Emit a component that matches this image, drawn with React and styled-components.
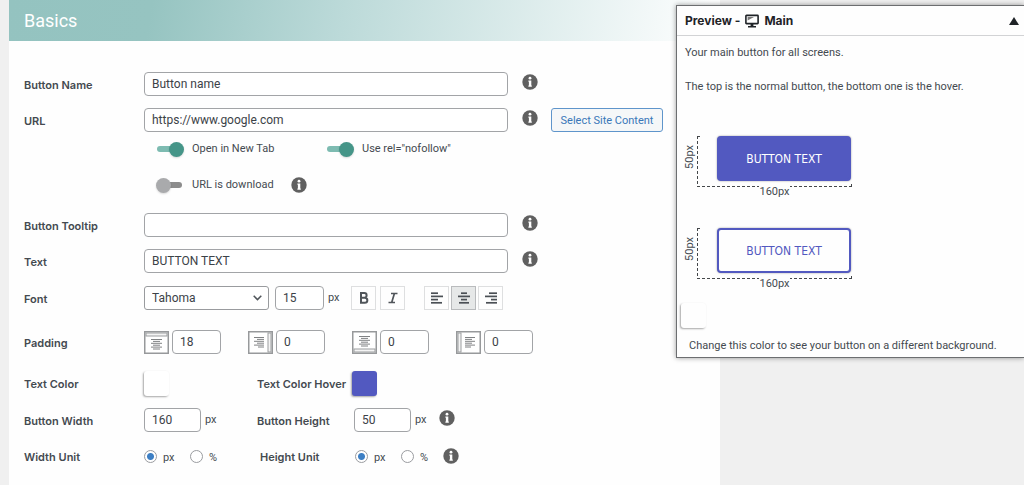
import React from 'react';
import styled, { createGlobalStyle } from 'styled-components';

// global styles

const GlobalStyle = createGlobalStyle`
  * {
    box-sizing: border-box;
  }

  body {
    margin: 0;
    background: #f0f0f0;
    color: #444a50;
    font-family: Roboto, "Liberation Sans", sans-serif;
    font-size: 11px;
    line-height: 16px;
  }

  button, input, select {
    margin: 0;
    font-family: inherit;
  }
`;

// the styles

const Page = styled.div`
  position: relative;
  min-height: 100vh;
  display: flex;
  padding: 0 304px 0 9px;
`;

const Panel = styled.main`
  flex: 1;
  min-width: 0;
  background: #fefefe;
`;

const PanelTitle = styled.h2`
  margin: 0;
  height: 41px;
  padding: 0 15px;
  color: #fff;
  font-size: 18px;
  font-weight: 400;
  line-height: 42px;
  background: linear-gradient(100deg, #94c3c0 0%, #96c4c1 20%, #bcdad9 47%, #fdfefe 98%);
`;

const Form = styled.form`
  padding: 31px 0 16px 15px;
`;

const Row = styled.div`
  display: flex;
  align-items: center;
  height: 24px;
  margin-bottom: ${(props) => props.$space || 12}px;
`;

const Label = styled.label`
  flex: none;
  width: ${(props) => props.$width || 120}px;
  padding-top: 2px;
  font-family: Inter, "Liberation Sans", sans-serif;
  font-weight: 600;
`;

const Input = styled.input`
  flex: none;
  width: ${(props) => props.$width || 364}px;
  height: 24px;
  padding: 0 7px;
  border: 1px solid #a2a4a7;
  border-radius: 4px;
  background: #fff;
  color: #3c4248;
  font-size: 12px;
`;

const InfoIcon = styled.svg`
  flex: none;
  width: 16px;
  height: 20px;
  margin-left: ${(props) => props.$left || 14}px;
  align-self: ${(props) => (props.$middle ? 'center' : 'flex-start')};
`;

const LinkButton = styled.button`
  height: 24px;
  width: 112px;
  margin-left: 13px;
  padding: 0;
  border: 1px solid #5f95cb;
  border-radius: 3px;
  background: #f5f7f8;
  color: #3a77b8;
  font-size: 11px;
  white-space: nowrap;
`;

const Toggles = styled.div`
  display: flex;
  align-items: center;
  padding-left: 132px;
`;

const ToggleLabel = styled.label`
  display: flex;
  align-items: center;
  gap: 8px;
  width: ${(props) => (props.$wide ? '170px' : 'auto')};
`;

const Switch = styled.input`
  appearance: none;
  position: relative;
  width: 28px;
  height: 16px;

  &::before {
    content: '';
    position: absolute;
    top: 5px;
    left: 1px;
    width: 25px;
    height: 6px;
    border-radius: 3px;
    background: #8c8c8c;
  }

  &::after {
    content: '';
    position: absolute;
    top: 1px;
    left: 0;
    width: 15px;
    height: 15px;
    border-radius: 50%;
    background: #a9aaac;
    box-shadow: 0 1px 2px rgba(0, 0, 0, 0.15);
  }

  &:checked::before {
    background: #7dbbb1;
  }

  &:checked::after {
    left: 13px;
    background: #459588;
  }
`;

const SelectBox = styled.div`
  position: relative;
  margin-right: 6px;

  select {
    appearance: none;
    display: block;
    width: 125px;
    height: 24px;
    padding: 0 7px;
    border: 1px solid #999b9e;
    border-radius: 3px;
    background: #fff;
    color: #3c4248;
    font-size: 12px;
  }

  svg {
    position: absolute;
    top: 9px;
    right: 7px;
    pointer-events: none;
  }
`;

const Unit = styled.span`
  width: ${(props) => props.$width || 'auto'};
  padding-left: 4px;
`;

const Buttons = styled.div`
  display: flex;
  gap: ${(props) => props.$gap}px;
  margin-right: 19px;
`;

const IconButton = styled.button`
  display: flex;
  align-items: center;
  justify-content: center;
  width: 25px;
  height: 24px;
  padding: 0;
  border: 1px solid ${(props) => (props.$active ? '#b9bbbd' : '#dedfe0')};
  background: ${(props) => (props.$active ? '#e6e8e8' : '#fefefe')};
  color: #50555a;
`;

const Paddings = styled.div`
  display: flex;
  gap: 27px;
`;

const PaddingField = styled.label`
  display: flex;
  align-items: center;
  gap: 3px;
`;

const Cell = styled.div`
  flex: none;
  display: flex;
  align-items: center;
  width: ${(props) => props.$width || 113}px;
`;

const Swatch = styled.button`
  width: 25px;
  height: 25px;
  padding: 0;
  border: 0;
  border-radius: 3px;
  background: ${(props) => props.$color};
  box-shadow: -1px 1px 2px rgba(0, 0, 0, 0.35);
`;

const RadioLabel = styled.label`
  display: flex;
  align-items: center;
  gap: 6px;
  width: 46px;

  span {
    padding-top: 3px;
  }
`;

const Radio = styled.input`
  appearance: none;
  width: 13px;
  height: 13px;
  border: 1px solid #9a9ca0;
  border-radius: 50%;
  background: #fff;

  &:checked {
    background: radial-gradient(circle, #3d7fc4 3px, #fff 4px);
  }
`;

// the preview box floats over the settings panel

const PreviewBox = styled.aside`
  position: absolute;
  top: 5px;
  right: 0;
  width: 348px;
  border: 1px solid #6c6e70;
  border-right: 0;
  background: #fefefe;
  box-shadow: 0 0 5px rgba(0, 0, 0, 0.4);
`;

const PreviewHead = styled.div`
  display: flex;
  align-items: center;
  justify-content: space-between;
  height: 30px;
  padding: 0 5px 0 8px;
  border-bottom: 1px solid #d2d3d5;
`;

const PreviewTitle = styled.h3`
  display: flex;
  align-items: center;
  gap: 5px;
  margin: 0;
  color: #1f2327;
  font-family: Inter, "Liberation Sans", sans-serif;
  font-size: 12px;
  font-weight: 700;
`;

const Collapse = styled.button`
  display: flex;
  padding: 0;
  border: 0;
  background: none;
`;

const PreviewText = styled.p`
  margin: 0;
  padding: 9px 8px;
`;

const Samples = styled.div`
  display: flex;
  flex-direction: column;
  gap: 31px;
  padding: 32px 5px 14px;
`;

const Sample = styled.div`
  display: grid;
  grid-template-columns: 15px 155px;
  grid-template-rows: 50px 11px;
`;

const HeightMark = styled.span`
  writing-mode: vertical-rl;
  transform: rotate(180deg);
  justify-self: center;
  align-self: center;
  padding-top: 8px;
  line-height: 14px;
`;

const Frame = styled.div`
  position: relative;
  padding-left: 20px;
  background: repeating-linear-gradient(180deg, #44474a 0 3px, transparent 3px 5px) left / 1px 100% no-repeat;

  &::before,
  &::after {
    content: '';
    position: absolute;
    background: #44474a;
  }

  &::before {
    top: 0;
    left: 0;
    width: 3px;
    height: 1px;
  }

  &::after {
    right: 0;
    bottom: 0;
    width: 1px;
    height: 2px;
  }
`;

const WidthMark = styled.div`
  grid-column: 2;
  display: flex;
  line-height: 11px;
`;

const Dashes = styled.span`
  flex: 1;
  height: 1px;
  background: repeating-linear-gradient(
    ${(props) => (props.$reverse ? '270deg' : '90deg')},
    #44474a 0 3px,
    transparent 3px 5px
  );
`;

const SampleButton = styled.button`
  display: block;
  width: 134px;
  height: 45px;
  padding: 0;
  border: 2px solid #5259c0;
  border-radius: 4px;
  background: ${(props) => (props.$hover ? '#fefefe' : '#5259c0')};
  color: ${(props) => (props.$hover ? '#5259c0' : '#fff')};
  font-family: "DejaVu Sans Condensed", "Noto Sans", sans-serif;
  font-size: 12px;
  box-shadow: 0 0 2px rgba(0, 0, 0, 0.4);
`;

const Background = styled.div`
  display: flex;
  padding: 0 4px;
`;

const Hint = styled.p`
  margin: 0;
  padding: 10px 12px 3px;
`;

// icons

function Info(props) {
  return (
    <InfoIcon viewBox="0 0 16 20" role="img" aria-label="Info" {...props}>
      <circle cx="8" cy="10" r="7.7" fill="#606060" />
      <circle cx="8" cy="6.2" r="1.4" fill="#fff" />
      <path d="M6.4 8.4h2.9v5h.5v1.3H6.4v-1.3h.5V9.7h-.5z" fill="#fff" />
    </InfoIcon>
  );
}

const alignLines = {
  left: [[1, 8], [1, 13], [1, 8], [1, 12]],
  center: [[4, 10], [1, 13], [4, 10], [2, 12]],
  right: [[5, 13], [1, 13], [7, 13], [2, 13]],
};

function AlignIcon({ align }) {
  return (
    <svg width="14" height="14" viewBox="0 0 14 14">
      {alignLines[align].map(([from, to], i) => (
        <path key={i} d={`M${from} ${2.2 + i * 3.2}H${to}`} stroke="#4b5055" strokeWidth="1.7" />
      ))}
    </svg>
  );
}

const bars = {
  top: [2, 2, 21, 3],
  right: [20, 2, 3, 19],
  bottom: [2, 18, 21, 3],
  left: [2, 2, 3, 19],
};

const textBlocks = {
  top: { y: 8, from: [7, 9, 7, 9, 7, 9], to: [18, 16, 18, 16, 18, 16] },
  right: { y: 6, from: [6, 9, 6, 9, 6, 10], to: [16, 16, 16, 16, 16, 16] },
  bottom: { y: 5, from: [7, 9, 7, 9, 7, 9], to: [18, 16, 18, 16, 18, 16] },
  left: { y: 6, from: [9, 9, 9, 9, 9, 9], to: [19, 16, 19, 16, 19, 15] },
};

function SideIcon({ side }) {
  const [x, y, width, height] = bars[side];
  const block = textBlocks[side];
  return (
    <svg width="25" height="23" viewBox="0 0 25 23">
      <rect x="0.75" y="0.75" width="23.5" height="21.5" fill="#fff" stroke="#97999b" strokeWidth="1.5" />
      <rect x={x} y={y} width={width} height={height} fill="#f4f4f4" stroke="#9c9ea0" />
      {block.from.map((from, i) => (
        <path key={i} d={`M${from} ${block.y + 0.5 + i * 1.9}H${block.to[i]}`} stroke="#808284" />
      ))}
    </svg>
  );
}

function ScreenIcon() {
  return (
    <svg width="14" height="14" viewBox="0 0 14 14">
      <rect x="0.9" y="1.4" width="12.2" height="8.2" rx="0.6" fill="none" stroke="#1f2327" strokeWidth="1.6" />
      <path d="M2.6 3H9L2.6 6.4z" fill="#777" />
      <path d="M5.6 10h2.8v2H11v1.5H3V12h2.6z" fill="#1f2327" />
    </svg>
  );
}

// one button with its measures

function ButtonSample({ hover }) {
  return (
    <Sample>
      <HeightMark>50px</HeightMark>
      <Frame>
        <SampleButton type="button" $hover={hover}>BUTTON TEXT</SampleButton>
      </Frame>
      <WidthMark>
        <Dashes />
        160px
        <Dashes $reverse />
      </WidthMark>
    </Sample>
  );
}

function UnitRadios({ name }) {
  return (
    <>
      <RadioLabel>
        <Radio type="radio" name={name} defaultChecked />
        <span>px</span>
      </RadioLabel>
      <RadioLabel>
        <Radio type="radio" name={name} />
        <span>%</span>
      </RadioLabel>
    </>
  );
}

function Basics() {
  return (
    <Panel>
      <PanelTitle>Basics</PanelTitle>
      <Form>
        <Row>
          <Label htmlFor="name">Button Name</Label>
          <Input id="name" defaultValue="Button name" />
          <Info />
        </Row>
        <Row $space={5}>
          <Label htmlFor="url">URL</Label>
          <Input id="url" defaultValue="https://www.google.com" />
          <Info />
          <LinkButton type="button">Select Site Content</LinkButton>
        </Row>
        <Row>
          <Toggles>
            <ToggleLabel $wide>
              <Switch type="checkbox" defaultChecked />
              Open in New Tab
            </ToggleLabel>
            <ToggleLabel>
              <Switch type="checkbox" defaultChecked />
              Use rel="nofollow"
            </ToggleLabel>
          </Toggles>
        </Row>
        <Row $space={16}>
          <Toggles>
            <ToggleLabel>
              <Switch type="checkbox" />
              URL is download
            </ToggleLabel>
            <Info $left={17} $middle />
          </Toggles>
        </Row>
        <Row>
          <Label htmlFor="tooltip">Button Tooltip</Label>
          <Input id="tooltip" />
          <Info />
        </Row>
        <Row $space={13}>
          <Label htmlFor="text">Text</Label>
          <Input id="text" defaultValue="BUTTON TEXT" />
          <Info />
        </Row>
        <Row $space={20}>
          <Label htmlFor="font">Font</Label>
          <SelectBox>
            <select id="font" defaultValue="Tahoma">
              <option>Tahoma</option>
            </select>
            <svg width="9" height="6" viewBox="0 0 9 6">
              <path d="M0.7 0.8L4.5 4.6L8.3 0.8" fill="none" stroke="#50555a" strokeWidth="1.5" />
            </svg>
          </SelectBox>
          <Input $width={49} defaultValue="15" aria-label="Font size" />
          <Unit $width="27px">px</Unit>
          <Buttons $gap={4}>
            <IconButton type="button" aria-label="Bold">
              <svg width="10" height="12" viewBox="0 0 10 12">
                <path
                  d="M2 1.1h3.3a2.2 2.2 0 0 1 0 4.6H2zM2 5.7h3.8a2.5 2.5 0 0 1 0 5.1H2z"
                  fill="none"
                  stroke="#50555a"
                  strokeWidth="2"
                />
              </svg>
            </IconButton>
            <IconButton type="button" aria-label="Italic">
              <svg width="10" height="12" viewBox="0 0 10 12">
                <path d="M3 1.5h6.5M0.5 10.5H7M6.4 1.5L3.7 10.5" stroke="#50555a" strokeWidth="1.7" />
              </svg>
            </IconButton>
          </Buttons>
          <Buttons $gap={2}>
            <IconButton type="button" aria-label="Align left"><AlignIcon align="left" /></IconButton>
            <IconButton type="button" aria-label="Align center" $active><AlignIcon align="center" /></IconButton>
            <IconButton type="button" aria-label="Align right"><AlignIcon align="right" /></IconButton>
          </Buttons>
        </Row>
        <Row $space={17}>
          <Label as="span">Padding</Label>
          <Paddings>
            {['top', 'right', 'bottom', 'left'].map((side) => (
              <PaddingField key={side}>
                <SideIcon side={side} />
                <Input
                  $width={49}
                  defaultValue={side === 'top' ? '18' : '0'}
                  aria-label={`Padding ${side}`}
                />
              </PaddingField>
            ))}
          </Paddings>
        </Row>
        <Row $space={13}>
          <Label htmlFor="color">Text Color</Label>
          <Cell>
            <Swatch type="button" id="color" $color="#fff" />
          </Cell>
          <Label htmlFor="colorHover" $width={95}>Text Color Hover</Label>
          <Swatch type="button" id="colorHover" $color="#5259c0" />
        </Row>
        <Row>
          <Label htmlFor="width">Button Width</Label>
          <Cell>
            <Input id="width" $width={57} defaultValue="160" />
            <Unit>px</Unit>
          </Cell>
          <Label htmlFor="height" $width={97}>Button Height</Label>
          <Input id="height" $width={57} defaultValue="50" />
          <Unit>px</Unit>
          <Info $left={12} />
        </Row>
        <Row>
          <Label as="span">Width Unit</Label>
          <Cell $width={116}>
            <UnitRadios name="widthUnit" />
          </Cell>
          <Label as="span" $width={95}>Height Unit</Label>
          <UnitRadios name="heightUnit" />
          <Info $left={-4} $middle />
        </Row>
      </Form>
    </Panel>
  );
}

function Preview() {
  return (
    <PreviewBox>
      <PreviewHead>
        <PreviewTitle>
          Preview -
          <ScreenIcon />
          Main
        </PreviewTitle>
        <Collapse type="button" aria-label="Collapse">
          <svg width="10" height="8" viewBox="0 0 10 8">
            <path d="M5 0L10 8H0z" fill="#1f2327" />
          </svg>
        </Collapse>
      </PreviewHead>
      <PreviewText>Your main button for all screens.</PreviewText>
      <PreviewText>The top is the normal button, the bottom one is the hover.</PreviewText>
      <Samples>
        <ButtonSample />
        <ButtonSample hover />
      </Samples>
      <Background>
        <Swatch type="button" $color="#fefefe" aria-label="Background color" />
      </Background>
      <Hint>Change this color to see your button on a different background.</Hint>
    </PreviewBox>
  );
}

function App() {
  return (
    <>
      <GlobalStyle />
      <Page>
        <Basics />
        <Preview />
      </Page>
    </>
  );
}

export default App;
